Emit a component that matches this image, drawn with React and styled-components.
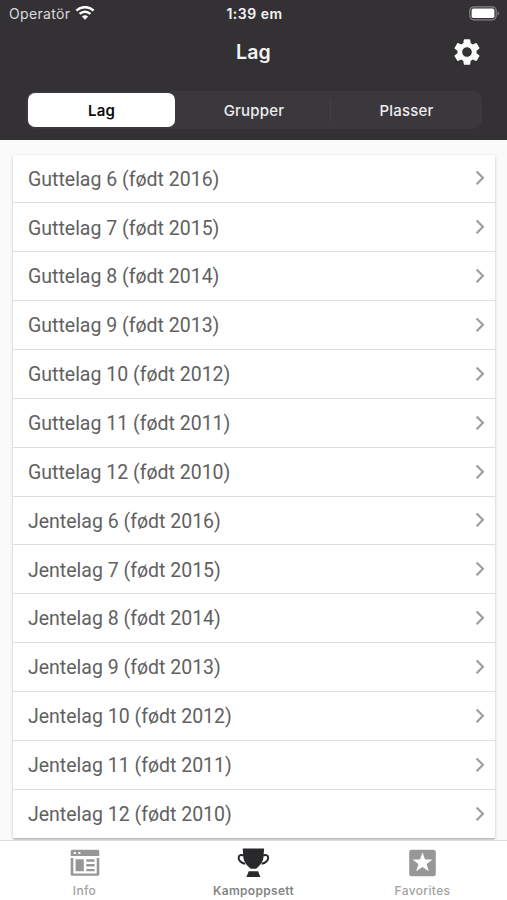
import React from 'react'
import styled, { createGlobalStyle } from 'styled-components'
import { MdSettings } from 'react-icons/md'

const GlobalStyle = createGlobalStyle`
    * {
        box-sizing: border-box;
    }
    body {
        margin: 0;
        background: #FFF;
        font-family: Inter, sans-serif;
    }
    svg {
        display: block;
    }
`

const Screen = styled.div`
    display: flex;
    flex-direction: column;
    height: 900px;
    overflow: hidden;
`

const Header = styled.header`
    flex: none;
    height: 140px;
    background: #333134;
    color: #F4F4F5;
`

const StatusBar = styled.div`
    display: grid;
    grid-template-columns: 1fr auto 1fr;
    align-items: center;
    height: 27px;
    padding: 0 7px 0 9px;
    font-size: 14px;
`

const Carrier = styled.div`
    display: flex;
    align-items: center;
    gap: 5px;
    color: #DCDCDE;
    letter-spacing: .35px;
`

const Clock = styled.div`
    font-weight: 600;
    font-size: 14px;
    letter-spacing: .5px;
`

const Battery = styled.div`
    display: flex;
    justify-content: flex-end;
    padding-bottom: 1px;
`

const TitleBar = styled.div`
    display: grid;
    grid-template-columns: 1fr auto 1fr;
    align-items: center;
    height: 50px;
    padding: 0 24px;
`

const Title = styled.h1`
    grid-column: 2;
    margin: 0;
    font-size: 19.5px;
    font-weight: 600;
    letter-spacing: .2px;
`

const SettingsButton = styled.button`
    justify-self: end;
    padding: 0;
    border: 0;
    background: none;
    color: #FAFAFA;
    font-size: 32px;
`

const Segments = styled.div`
    display: flex;
    align-items: center;
    height: 38px;
    margin: 14px 25px 0 26px;
    padding: 2px 0 2px 2px;
    border-radius: 9px;
    background: #3B383D;
`

const Segment = styled.button`
    flex: 1;
    height: ${props => props.$active ? '34px' : '22px'};
    padding: 0;
    border: 0;
    border-left: ${props => props.$divided ? '1px solid #454247' : '0'};
    border-radius: ${props => props.$active ? '7px' : '0'};
    background: ${props => props.$active ? '#FFF' : 'none'};
    color: ${props => props.$active ? '#0A0A0A' : '#EDEDEE'};
    font-family: inherit;
    font-size: 15px;
    font-weight: ${props => props.$active ? 600 : 500};
    letter-spacing: .2px;
    &:first-child {
        flex: none;
        width: 147px;
    }
    &:nth-child(2) {
        flex: none;
        width: 155px;
        padding-left: 3px;
    }
`

const Content = styled.main`
    flex: 1;
    min-height: 0;
    padding: 14.5px 12px 0 13px;
    background: #FAFAFA;
`

const List = styled.ul`
    height: 684px;
    margin: 0;
    padding: 0;
    list-style: none;
    display: grid;
    grid-auto-rows: 1fr;
    background: #FFF;
    border-radius: 2px;
    box-shadow: 0 1px 3px rgba(0, 0, 0, .25);
`

const Row = styled.li`
    display: flex;
    align-items: center;
    justify-content: space-between;
    padding: 0 8px 0 15px;
    border-bottom: 1px solid #DEDEDE;
    color: #616161;
    font-family: Roboto, sans-serif;
    font-size: 19.5px;
    &:last-child {
        border-bottom-color: #BDBDBD;
    }
`

const TeamName = styled.span`
    padding-top: 1.5px;
`

const TabBar = styled.nav`
    flex: none;
    display: grid;
    grid-template-columns: repeat(3, 1fr);
    height: 60px;
    border-top: 1px solid #DDD;
    background: #FFF;
`

const Tab = styled.a`
    display: flex;
    flex-direction: column;
    align-items: center;
    padding-top: 6px;
    color: ${props => props.$active ? '#29282A' : '#979797'};
`

const TabLabel = styled.span`
    margin-top: 6px;
    color: ${props => props.$active ? '#858585' : '#A2A2A2'};
    font-size: 12px;
    line-height: 15px;
    font-weight: ${props => props.$active ? 600 : 500};
    letter-spacing: ${props => props.$active ? '.3px' : '.35px'};
`

const teams = [
    ...[6, 7, 8, 9, 10, 11, 12].map(age => `Guttelag ${age} (født ${2022 - age})`),
    ...[6, 7, 8, 9, 10, 11, 12].map(age => `Jentelag ${age} (født ${2022 - age})`),
]

const tabs = [
    { label: 'Info', icon: InfoIcon },
    { label: 'Kampoppsett', icon: TrophyIcon, active: true },
    { label: 'Favorites', icon: FavoriteIcon },
]

export default function App() {
    return (
        <>
            <GlobalStyle />
            <Screen>
                <Header>
                    <StatusBar>
                        <Carrier>Operatör <WifiIcon /></Carrier>
                        <Clock>1:39 em</Clock>
                        <Battery><BatteryIcon /></Battery>
                    </StatusBar>
                    <TitleBar>
                        <Title>Lag</Title>
                        <SettingsButton><MdSettings /></SettingsButton>
                    </TitleBar>
                    <Segments>
                        <Segment $active>Lag</Segment>
                        <Segment>Grupper</Segment>
                        <Segment $divided>Plasser</Segment>
                    </Segments>
                </Header>
                <Content>
                    <List>
                        {teams.map(team => (
                            <Row key={team}>
                                <TeamName>{team}</TeamName>
                                <Chevron />
                            </Row>
                        ))}
                    </List>
                </Content>
                <TabBar>
                    {tabs.map(({ label, icon: Icon, active }) => (
                        <Tab key={label} $active={active}>
                            <Icon />
                            <TabLabel $active={active}>{label}</TabLabel>
                        </Tab>
                    ))}
                </TabBar>
            </Screen>
        </>
    )
}

function WifiIcon() {
    return (
        <svg width="20" height="15" viewBox="0 0 20 15" fill="none" stroke="#FFF" strokeWidth="2.5">
            <path d="M1.4 4.600a12.400 12.400 0 0 1 17.200 0" />
            <path d="M4.600 7.900a7.800 7.800 0 0 1 10.800 0" />
            <path d="M10 13.800 6.900 10.600a4.600 4.600 0 0 1 6.200 0z" fill="#FFF" stroke="none" />
        </svg>
    )
}

function BatteryIcon() {
    return (
        <svg width="31" height="15" viewBox="0 0 31 15">
            <rect x=".8" y=".8" width="26.4" height="13" rx="4" fill="none" stroke="#858387" strokeWidth="1.2" />
            <rect x="2.6" y="2.6" width="22.8" height="9.4" rx="1.8" fill="#FFF" />
            <path d="M28.6 5.2c2 .8 2 3.4 0 4.2z" fill="#858387" />
        </svg>
    )
}

function Chevron() {
    return (
        <svg width="14" height="16" viewBox="0 0 14 16" fill="none" stroke="#9E9E9E" strokeWidth="2.2">
            <path d="m3.6 1.4 6.3 6.4-6.3 6.4" />
        </svg>
    )
}

function InfoIcon() {
    return (
        <svg width="30" height="30" viewBox="0 0 30 30" fill="currentColor">
            <path fillRule="evenodd" d="M2.5 2.8h25q1.8 0 1.8 1.8V9H.7V4.6q0-1.8 1.8-1.8zM3.8 5v2h2V5zm4.6 0v2h2V5z" />
            <path d="M.7 11h2.6v15.4h23.4V11h2.6v16.4q0 1.4-1.4 1.4H2.1q-1.4 0-1.4-1.4z" />
            <path d="M5.6 12.3h8.2v12H5.6zM16.3 12.3h8.3v2.4h-8.3zM16.3 17.1h8.3v2.4h-8.3zM16.3 21.9h8.3v2.4h-8.3z" />
        </svg>
    )
}

function TrophyIcon() {
    return (
        <svg width="34" height="30" viewBox="0.6 0 34 30" fill="currentColor">
            <path d="M6.3 1.5h21.4l-.6 8.5c-.4 5-3.600 8.600-7.400 11.800h-5.400C10.500 18.600 7.300 15 6.900 10z" />
            <path d="M8.8 16.8C4.800 16.300 2.200 13.300 2.200 10.900c0-3 3.300-3.600 5-2.200M25.200 16.800c4-.5 6.600-3.500 6.600-5.900 0-3-3.300-3.600-5-2.200" fill="none" stroke="currentColor" strokeWidth="2" />
            <path d="M12.300 24.300h9.400l2.400 6H9.900z" />
        </svg>
    )
}

function FavoriteIcon() {
    return (
        <svg width="28" height="30" viewBox="0.5 0 28 30">
            <rect x=".7" y="2.7" width="26.6" height="26.6" rx="2.5" fill="currentColor" />
            <path d="m14 5.4 2.600 7h7.500l-6 4.600 2.200 7.300-6.300-4.400-6.300 4.400 2.200-7.300-6-4.600h7.500z" fill="#FFF" />
        </svg>
    )
}
